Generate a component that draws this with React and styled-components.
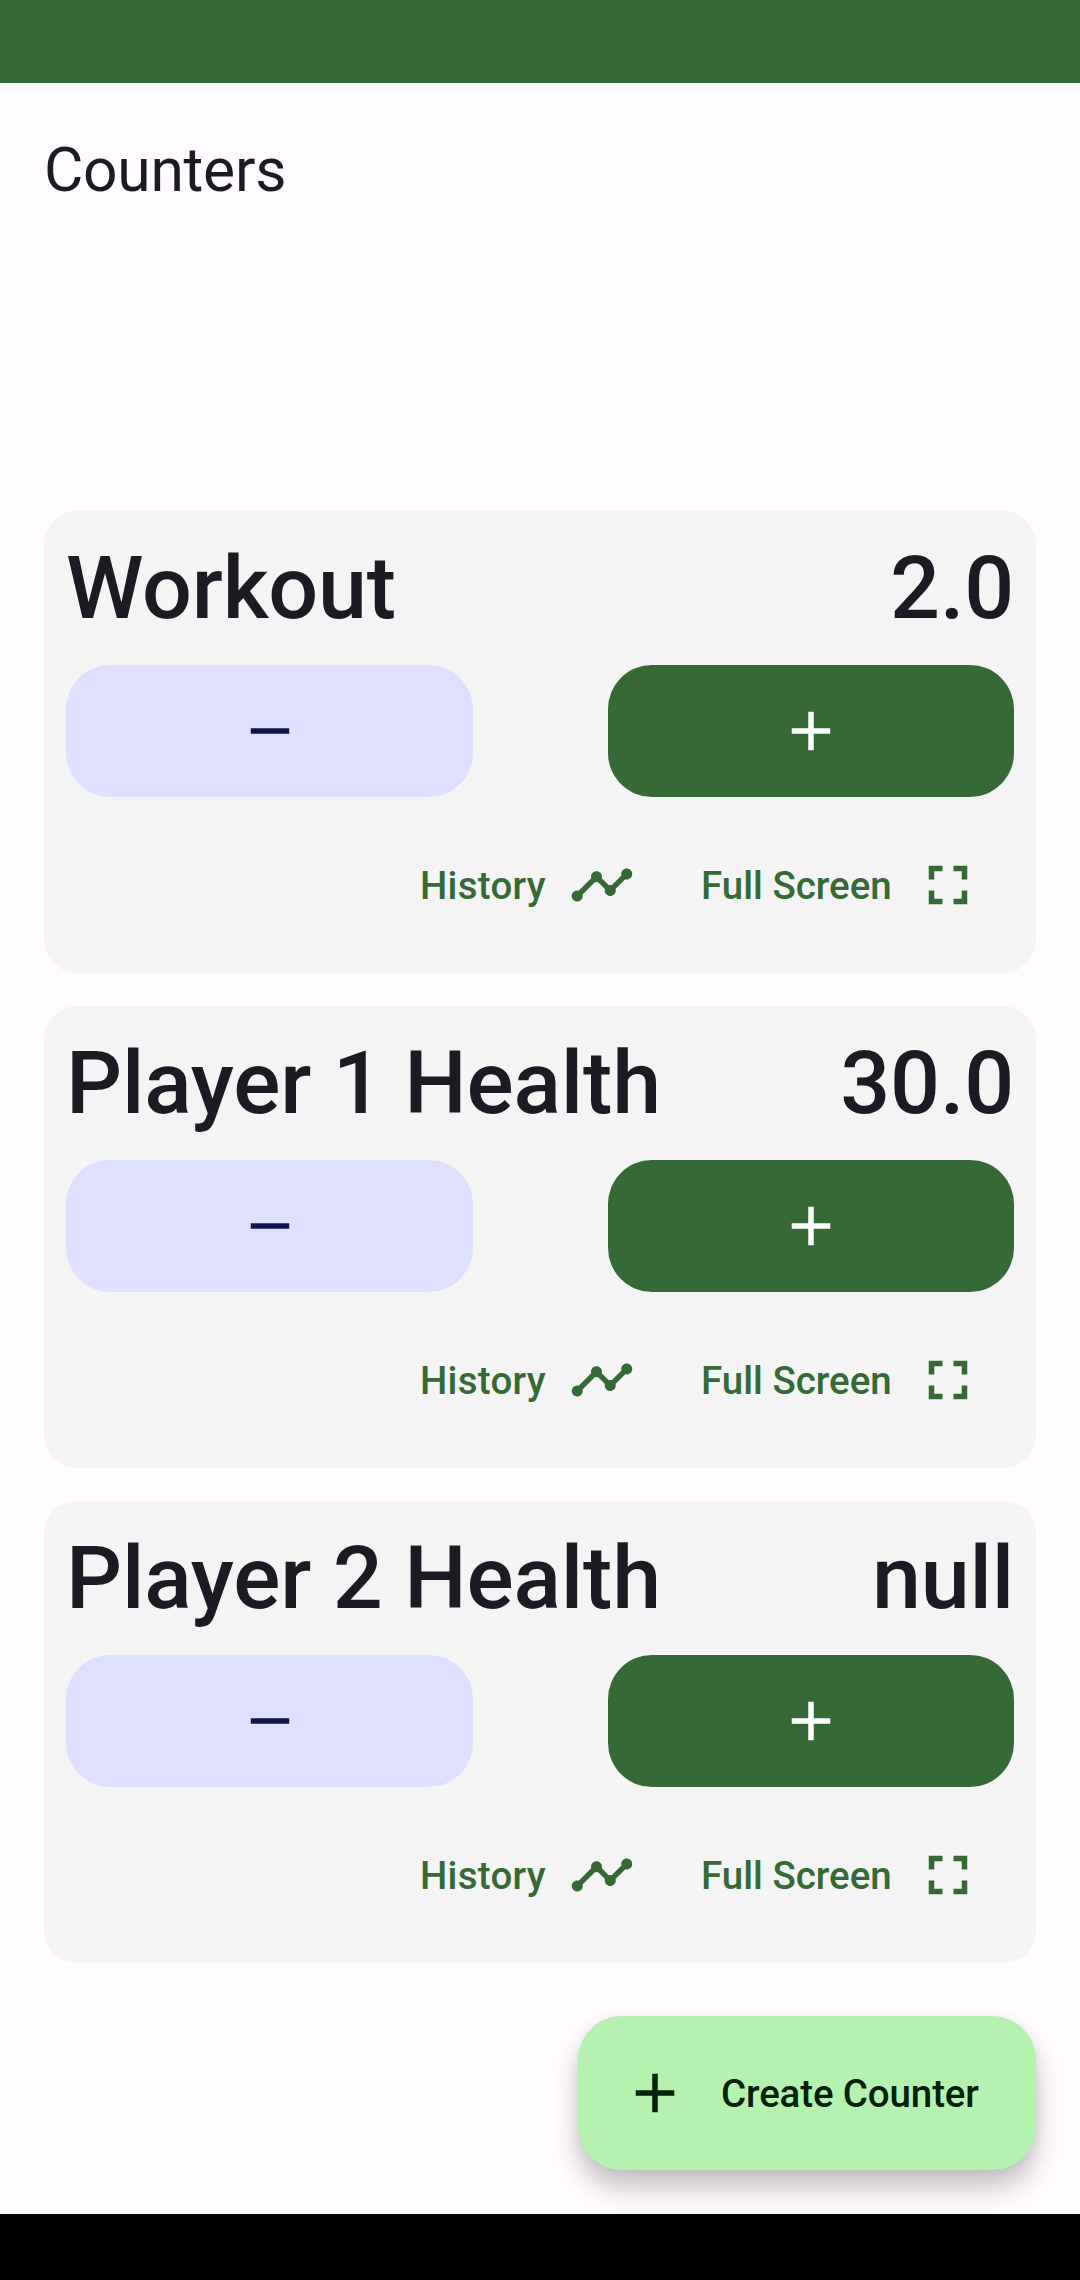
import React from 'react';
import styled, { createGlobalStyle } from 'styled-components';

const GlobalStyle = createGlobalStyle`
  * { box-sizing: border-box; }
  body { margin: 0; background: #fffbff; }
`;

const Screen = styled.div`
  display: flex;
  flex-direction: column;
  width: 1080px;
  height: 2280px;
  overflow: hidden;
  background: #fffbff;
  color: #1b1b23;
  font-family: Roboto, 'Liberation Sans', sans-serif;
`;

const StatusBar = styled.div`
  flex: none;
  height: 83px;
  background: #356a36;
`;

const TopBar = styled.header`
  flex: none;
  height: 428px;
  padding: 49px 44px 0;
`;

const PageTitle = styled.h1`
  margin: 0;
  font-size: 60.5px;
  line-height: 77px;
  font-weight: 400;
  letter-spacing: -0.27px;
`;

const CounterList = styled.main`
  flex: none;
  display: flex;
  flex-direction: column;
  gap: 33px;
  padding: 0 44px;
`;

const Card = styled.section`
  display: flex;
  flex-direction: column;
  height: 462px;
  padding: 22px;
  border-radius: 33px;
  background: #f4f4f4;
`;

const CardHeader = styled.div`
  display: flex;
  justify-content: space-between;
  height: 132px;
  font-size: 88px;
  line-height: 110px;
  font-weight: 500;
  letter-spacing: -0.18px;
  white-space: nowrap;
`;

const StepRow = styled.div`
  display: flex;
  justify-content: space-between;
`;

const StepButton = styled.button`
  display: flex;
  align-items: center;
  justify-content: center;
  width: ${(p) => (p.$primary ? 406 : 407)}px;
  height: 132px;
  padding: 0;
  border: 0;
  border-radius: 44px;
  background: ${(p) => (p.$primary ? '#356a36' : '#dfe0ff')};
  color: ${(p) => (p.$primary ? '#ffffff' : '#11144b')};
`;

const ActionRow = styled.div`
  display: flex;
  justify-content: flex-end;
  padding-top: 22px;
`;

const TextButton = styled.button`
  display: flex;
  align-items: center;
  gap: 22px;
  height: 132px;
  padding: 0 33px;
  border: 0;
  background: none;
  color: #356a36;
  font: 500 38.5px/55px Roboto, 'Liberation Sans', sans-serif;
  white-space: nowrap;
`;

const ActionLabel = styled.span`
  width: ${(p) => p.$width}px;
  text-align: left;
  letter-spacing: ${(p) => p.$tracking || 0}px;
`;

const Icon = styled.svg`
  flex: none;
  width: 66px;
  height: 66px;
  fill: currentColor;
`;

const FabArea = styled.div`
  flex: 1;
  display: flex;
  justify-content: flex-end;
  align-items: flex-end;
  padding: 0 44px 44px;
`;

const Fab = styled.button`
  display: flex;
  align-items: center;
  gap: 33px;
  width: 458px;
  height: 154px;
  padding: 0 0 0 44px;
  border: 0;
  border-radius: 44px;
  background: #b6f2af;
  color: #002106;
  font: 500 38.5px/55px Roboto, 'Liberation Sans', sans-serif;
  letter-spacing: -0.13px;
  white-space: nowrap;
  box-shadow: 0 18px 28px rgba(0, 0, 0, 0.23), 0 2px 14px rgba(0, 0, 0, 0.05);
`;

const NavigationBar = styled.div`
  position: relative;
  flex: none;
  height: 66px;
  background: #000;
`;

const paths = {
  minus: 'M19 13H5v-2h14v2z',
  plus: 'M19 13h-6v6h-2v-6H5v-2h6V5h2v6h6v2z',
  timeline:
    'M23 8c0 1.1-.9 2-2 2-.18 0-.35-.02-.51-.07l-3.56 3.55c.05.16.07.34.07.52 0 1.1-.9 2-2 2s-2-.9-2-2c0-.18.02-.36.07-.52l-2.55-2.55c-.16.05-.34.07-.52.07s-.36-.02-.52-.07l-4.55 4.56c.05.16.07.33.07.51 0 1.1-.9 2-2 2s-2-.9-2-2 .9-2 2-2c.18 0 .35.02.51.07l4.56-4.55C8.02 9.36 8 9.18 8 9c0-1.1.9-2 2-2s2 .9 2 2c0 .18-.02.36-.07.52l2.55 2.55c.16-.05.34-.07.52-.07s.36.02.52.07l3.55-3.56C19.02 8.35 19 8.18 19 8c0-1.1.9-2 2-2s2 .9 2 2z',
  fullscreen:
    'M7 14H5v5h5v-2H7v-3zm-2-4h2V7h3V5H5v5zm12 7h-3v2h5v-5h-2v3zM14 5v2h3v3h2V5h-5z',
};

const Glyph = ({ name }) => (
  <Icon viewBox="0 0 24 24" aria-hidden="true">
    <path d={paths[name]} />
  </Icon>
);

const counters = [
  { name: 'Workout', value: '2.0' },
  { name: 'Player 1 Health', value: '30.0' },
  { name: 'Player 2 Health', value: 'null' },
];

const CounterCard = ({ name, value }) => (
  <Card>
    <CardHeader>
      <span>{name}</span>
      <span>{value}</span>
    </CardHeader>
    <StepRow>
      <StepButton><Glyph name="minus" /></StepButton>
      <StepButton $primary><Glyph name="plus" /></StepButton>
    </StepRow>
    <ActionRow>
      <TextButton>
        <ActionLabel $width={127} $tracking={0.27}>History</ActionLabel>
        <Glyph name="timeline" />
      </TextButton>
      <TextButton>
        <ActionLabel $width={192}>Full Screen</ActionLabel>
        <Glyph name="fullscreen" />
      </TextButton>
    </ActionRow>
  </Card>
);

export default function App() {
  return (
    <>
      <GlobalStyle />
      <Screen>
        <StatusBar />
        <TopBar><PageTitle>Counters</PageTitle></TopBar>
        <CounterList>
          {counters.map((c) => <CounterCard key={c.name} {...c} />)}
        </CounterList>
        <FabArea>
          <Fab><Glyph name="plus" /><span>Create Counter</span></Fab>
        </FabArea>
        <NavigationBar />
      </Screen>
    </>
  );
}
